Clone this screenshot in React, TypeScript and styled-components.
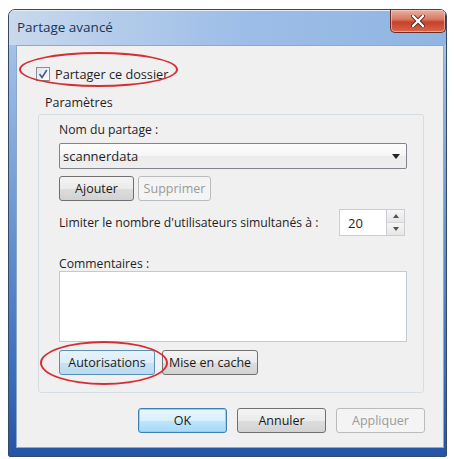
import React from "react";
import styled, { createGlobalStyle, css } from "styled-components";

const GlobalStyle = createGlobalStyle`
  html, body { margin: 0; padding: 0; background: #ffffff; }
  body { font-family: "Open Sans", "Noto Sans", "Liberation Sans", sans-serif; font-size: 12px; color: #1f1f1f; }
`;

const Window = styled.div`
  margin: 9px 0 0 8px;
  width: 439px;
  height: 448px;
  box-sizing: border-box;
  border: 1px solid #34496a;
  border-radius: 7px 7px 2px 2px;
  background: linear-gradient(180deg, #b9cfea 0%, #9dbde5 12%, #6e99d2 45%, #3c70bc 80%, #2555a6 100%);
  display: flex;
  flex-direction: column;
  overflow: hidden;
`;

const TitleBar = styled.div`
  height: 35px;
  flex: none;
  display: flex;
  justify-content: space-between;
  align-items: flex-start;
  padding-left: 8px;
  background: linear-gradient(90deg, #cad9ec 0%, #b2cbea 25%, #9cbde7 55%, #90b5e2 100%);
  box-shadow: inset 0 1px 0 #e6eef8;
`;

const Title = styled.span`
  margin-top: 9px;
  font-size: 13.5px;
  line-height: 16px;
  color: #1c3454;
`;

const CloseButton = styled.div`
  width: 56px;
  height: 23px;
  box-sizing: border-box;
  border: 1px solid #6a2c24;
  border-top: none;
  border-radius: 0 0 5px 5px;
  background: linear-gradient(180deg, #eab1a2 0%, #d87a63 42%, #c6412a 55%, #d9664a 100%);
  display: flex;
  align-items: center;
  justify-content: center;
  box-shadow: inset 0 0 0 1px rgba(255, 215, 205, 0.55);
`;

const FrameBody = styled.div`
  flex: 1;
  display: flex;
  padding: 0 2px 8px 7px;
  min-height: 0;
`;

const Client = styled.div`
  flex: 1;
  background: #f0f0f0;
  border: 1px solid #8ea9cb;
  display: flex;
  flex-direction: column;
  padding: 21px 18px 0 19px;
`;

const CheckRow = styled.label`
  position: relative;
  display: flex;
  align-items: center;
  gap: 5px;
  height: 14px;
  line-height: 14px;
  font-size: 12.7px;
  &::after {
    content: "";
    position: absolute;
    left: -17px;
    top: -15px;
    width: 159px;
    height: 35px;
    box-sizing: border-box;
    border: 2px solid #d42f35;
    border-radius: 50%;
    pointer-events: none;
  }
`;

const CheckBox = styled.span`
  width: 14px;
  height: 14px;
  box-sizing: border-box;
  border: 1px solid #8a8f96;
  background: linear-gradient(135deg, #dfe2e7 0%, #f4f5f7 60%, #ffffff 100%);
  display: flex;
  align-items: center;
  justify-content: center;
`;

const GroupLabel = styled.div`
  margin: 14px 0 0 9px;
  line-height: 16px;
  font-size: 12.5px;
`;

const GroupBox = styled.div`
  margin: 3px 1px 0 2px;
  border: 1px solid #d6dde3;
  border-radius: 3px;
  padding: 8px 16px 17px 20px;
  display: flex;
  flex-direction: column;
`;

const FieldLabel = styled.div<{ $top?: number }>`
  line-height: 14px;
  font-size: 12.2px;
  margin-top: ${(p) => p.$top ?? 0}px;
`;

const Combo = styled.div`
  margin-top: 6px;
  height: 26px;
  box-sizing: border-box;
  border: 1px solid #80858c;
  border-radius: 2px;
  background: linear-gradient(180deg, #fdfdfd 0%, #f5f5f5 50%, #ececec 51%, #eeeeee 100%);
  display: flex;
  align-items: center;
  justify-content: space-between;
  padding: 0 6px 0 3px;
  font-size: 13px;
`;

const Row = styled.div<{ $top: number; $gap?: number }>`
  margin-top: ${(p) => p.$top}px;
  display: flex;
  align-items: center;
  gap: ${(p) => p.$gap ?? 4}px;
`;

type Variant = "normal" | "disabled" | "default" | "focused";

const variantStyles: Record<Variant, ReturnType<typeof css>> = {
  normal: css`
    border: 1px solid #707070;
    background: linear-gradient(180deg, #f3f3f3 0%, #ebebeb 50%, #dddddd 51%, #d2d2d2 100%);
    color: #1a1a1a;
  `,
  disabled: css`
    border: 1px solid #b9bcbf;
    background: #f4f4f4;
    color: #9a9a9a;
  `,
  default: css`
    border: 1px solid #3c7fb1;
    background: linear-gradient(180deg, #eaf6fd 0%, #d9f0fc 50%, #bee6fd 51%, #a7d9f5 100%);
    box-shadow: inset 0 0 0 1px #8fd3f5;
    color: #1a1a1a;
  `,
  focused: css`
    border: 1px solid #5a8fb8;
    background: linear-gradient(180deg, #e8f4fb 0%, #dcedf8 50%, #c8e2f3 51%, #bcdaef 100%);
    color: #1a1a1a;
  `,
};

const Button = styled.div<{ $variant?: Variant; $w: number; $h?: number }>`
  width: ${(p) => p.$w}px;
  height: ${(p) => p.$h ?? 25}px;
  box-sizing: border-box;
  border-radius: 3px;
  display: flex;
  align-items: center;
  justify-content: center;
  font-size: 12.5px;
  ${(p) => variantStyles[p.$variant ?? "normal"]}
`;

const Highlight = styled.span`
  position: relative;
  display: flex;
  &::after {
    content: "";
    position: absolute;
    left: -19px;
    top: -9px;
    width: 128px;
    height: 44px;
    box-sizing: border-box;
    border: 2px solid #d42f35;
    border-radius: 50%;
    pointer-events: none;
    z-index: 2;
  }
`;

const Spinner = styled.div`
  margin-left: auto;
  margin-right: 2px;
  width: 66px;
  height: 27px;
  box-sizing: border-box;
  border: 1px solid #c9ced4;
  background: #ffffff;
  display: flex;
`;

const SpinValue = styled.span`
  flex: 1;
  display: flex;
  align-items: center;
  padding-left: 8px;
  font-size: 13px;
`;

const SpinButtons = styled.div`
  width: 17px;
  display: flex;
  flex-direction: column;
  border-left: 1px solid #c9ced4;
`;

const SpinHalf = styled.div`
  flex: 1;
  display: flex;
  align-items: center;
  justify-content: center;
  background: linear-gradient(180deg, #f6f6f6, #e6e6e6);
  & + & { border-top: 1px solid #d6d6d6; }
`;

const TextArea = styled.div`
  height: 71px;
  box-sizing: border-box;
  border: 1px solid #c4cad1;
  background: #ffffff;
`;

const Footer = styled.div`
  margin-top: 15px;
  display: flex;
  justify-content: flex-end;
  gap: 10px;
`;

export default function App() {
  return (
    <>
      <GlobalStyle />
      <Window>
        <TitleBar>
          <Title>Partage avancé</Title>
          <CloseButton>
            <svg width="14" height="12" viewBox="0 0 14 12">
              <path d="M2 1 L12 11 M12 1 L2 11" stroke="#5a2018" strokeWidth="4" strokeLinecap="round" />
              <path d="M2 1 L12 11 M12 1 L2 11" stroke="#ffffff" strokeWidth="2.4" strokeLinecap="round" />
            </svg>
          </CloseButton>
        </TitleBar>
        <FrameBody>
          <Client>
            <CheckRow>
              <CheckBox>
                <svg width="10" height="10" viewBox="0 0 10 10">
                  <path d="M1.5 5 L4 8.5 L8.8 1" fill="none" stroke="#4a5a95" strokeWidth="1.6" />
                </svg>
              </CheckBox>
              Partager ce dossier
            </CheckRow>
            <GroupLabel>Paramètres</GroupLabel>
            <GroupBox>
              <FieldLabel>Nom du partage :</FieldLabel>
              <Combo>
                <span>scannerdata</span>
                <svg width="8" height="5" viewBox="0 0 8 5">
                  <path d="M0 0 H8 L4 5 Z" fill="#222" />
                </svg>
              </Combo>
              <Row $top={7}>
                <Button $w={75}>Ajouter</Button>
                <Button $w={73} $variant="disabled">Supprimer</Button>
              </Row>
              <Row $top={8}>
                <FieldLabel>Limiter le nombre d'utilisateurs simultanés à :</FieldLabel>
                <Spinner>
                  <SpinValue>20</SpinValue>
                  <SpinButtons>
                    <SpinHalf>
                      <svg width="6" height="4" viewBox="0 0 6 4"><path d="M0 4 L3 0 L6 4 Z" fill="#555" /></svg>
                    </SpinHalf>
                    <SpinHalf>
                      <svg width="6" height="4" viewBox="0 0 6 4"><path d="M0 0 L6 0 L3 4 Z" fill="#555" /></svg>
                    </SpinHalf>
                  </SpinButtons>
                </Spinner>
              </Row>
              <FieldLabel $top={21}>Commentaires :</FieldLabel>
              <TextArea />
              <Row $top={8} $gap={7}>
                <Highlight>
                  <Button $w={96} $variant="focused">Autorisations</Button>
                </Highlight>
                <Button $w={96}>Mise en cache</Button>
              </Row>
            </GroupBox>
            <Footer>
              <Button $w={89} $variant="default">OK</Button>
              <Button $w={89}>Annuler</Button>
              <Button $w={89} $variant="disabled">Appliquer</Button>
            </Footer>
          </Client>
        </FrameBody>
      </Window>
    </>
  );
}
